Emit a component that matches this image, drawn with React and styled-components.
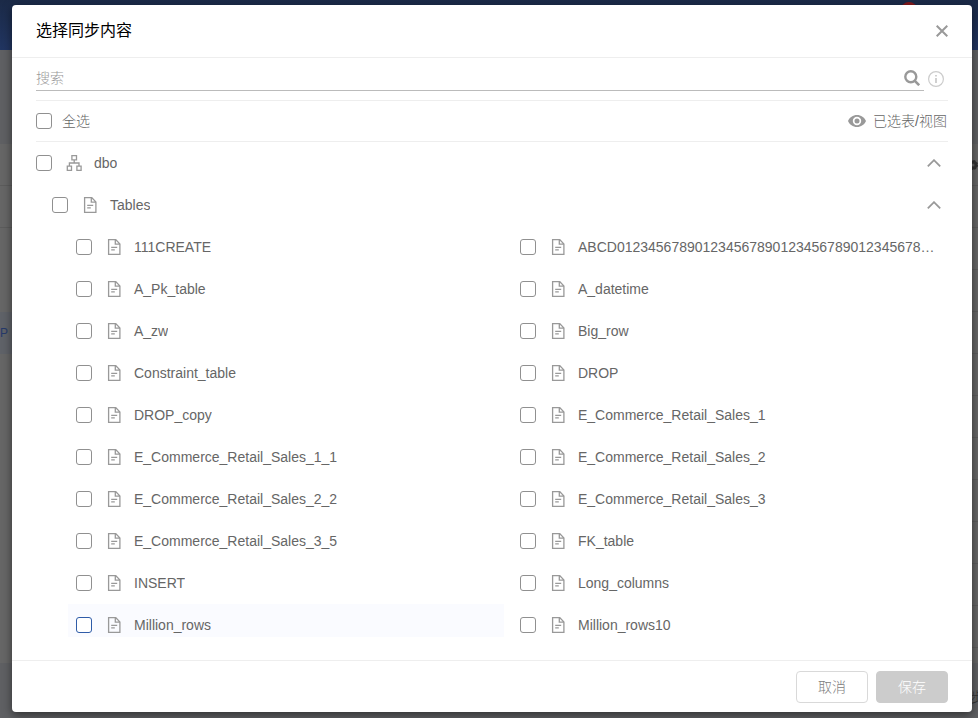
import { useState } from 'react';
import styled, { createGlobalStyle, css } from 'styled-components';

const GlobalStyle = createGlobalStyle`
  *, *::before, *::after {
    box-sizing: border-box;
  }

  body {
    margin: 0;
    color: #666;
    font-family: "Liberation Sans", "Noto Sans CJK SC", sans-serif;
    font-size: 14px;
    font-weight: 300;
    line-height: 20px;
  }

  button, input {
    font: inherit;
  }
`;

const Page = styled.div`
  position: relative;
  height: 100vh;
  overflow: hidden;
  display: flex;
  flex-direction: column;
  background: #5f6063;
`;

const TopBar = styled.div`
  flex: none;
  height: 50px;
  display: flex;
  align-items: flex-start;
  justify-content: flex-end;
  padding: 2px 61px 0 0;
  background: linear-gradient(#1b2a47, #213561);
`;

const Badge = styled.span`
  width: 16px;
  height: 16px;
  border-radius: 50%;
  background: #85191c;
`;

const PageBody = styled.div`
  flex: 1;
  min-height: 0;
  display: flex;
  flex-direction: column;
  padding-top: 94px;
`;

const PageTable = styled.div`
  flex: 1;
  min-height: 0;
  overflow: hidden;
  display: grid;
  grid-template-columns: 1fr 1fr;
  background: #666;
`;

const PageRow = styled.div`
  height: 42px;
  display: flex;
  align-items: center;
  justify-content: ${props => props.$end ? 'flex-end' : 'flex-start'};
  border-bottom: 1px solid ${props => props.$plain ? 'transparent' : '#5c5c5c'};
  background: ${props => props.$active ? '#5f6268' : 'transparent'};
  color: #26396a;
  font-size: 12px;
`;

const PageFooter = styled.div`
  flex: none;
  height: 55px;
  display: flex;
  align-items: center;
  justify-content: flex-end;
  margin-right: -6px;
  padding-top: 12px;
  color: #333;
`;

const Overlay = styled.div`
  position: absolute;
  inset: 0;
  display: flex;
  padding: 5px 6px 6px 12px;
`;

const Dialog = styled.form`
  flex: 1;
  min-width: 0;
  display: flex;
  flex-direction: column;
  border-radius: 4px;
  background: #fff;
  box-shadow: 0 3px 10px rgba(0, 0, 0, 0.5);
`;

const DialogHeader = styled.header`
  flex: none;
  height: 53px;
  display: flex;
  align-items: center;
  justify-content: space-between;
  padding: 0 20px 0 24px;
  border-bottom: 1px solid #eee;
`;

const Title = styled.h1`
  margin: 0;
  color: #000;
  font-size: 16px;
  font-weight: 400;
  line-height: 24px;
`;

const IconButton = styled.button`
  flex: none;
  display: flex;
  align-items: center;
  justify-content: center;
  width: ${props => props.$large ? '24px' : '20px'};
  height: ${props => props.$large ? '26px' : '20px'};
  padding: 0;
  border: 0;
  background: none;
  color: #999;
  cursor: pointer;
`;

const DialogBody = styled.div`
  flex: 1;
  min-height: 0;
  display: flex;
  flex-direction: column;
  padding: 8px 24px 23px;
`;

const SearchRow = styled.div`
  flex: none;
  height: 35px;
  display: flex;
  align-items: flex-start;
  border-bottom: 1px solid #eee;
`;

const SearchBox = styled.div`
  flex: 1;
  height: 25px;
  display: flex;
  align-items: center;
  border-bottom: 1px solid #bbb;
`;

const SearchInput = styled.input`
  flex: 1;
  min-width: 0;
  padding: 0;
  border: 0;
  outline: none;
  background: none;
  color: #666;

  &::placeholder {
    color: #999;
    opacity: 1;
  }
`;

const SelectAllRow = styled.div`
  flex: none;
  height: 41px;
  display: flex;
  align-items: center;
  justify-content: space-between;
  border-bottom: 1px solid #eee;
`;

const CheckLabel = styled.label`
  flex: 1;
  min-width: 0;
  display: flex;
  align-items: center;
  cursor: pointer;
`;

const Checkbox = styled.input`
  flex: none;
  appearance: none;
  width: 16px;
  height: 16px;
  margin: 0;
  border: 1px solid #909090;
  border-radius: 3px;
  background: #fff;

  ${props => props.$highlight && css`
    border-color: #2f5ca8;
  `}

  &:checked {
    border-color: #2f5ca8;
    background: #2f5ca8;
  }
`;

const LabelText = styled.span`
  padding-left: ${props => props.$plain ? '10px' : '12px'};
  overflow: hidden;
  text-overflow: ellipsis;
  white-space: nowrap;
`;

const RowIcon = styled.span`
  flex: none;
  display: flex;
  margin-left: 14px;
  color: #999;
`;

const ViewSelected = styled.button`
  display: flex;
  align-items: center;
  gap: 7px;
  padding: 0 1px 0 0;
  border: 0;
  background: none;
  color: #666;
  cursor: pointer;

  svg {
    color: #999;
  }
`;

const Tree = styled.div`
  flex: 1;
  min-height: 0;
  overflow: hidden;
`;

const GroupRow = styled.div`
  height: 42px;
  display: flex;
  align-items: center;
  padding: 0 4px 0 ${props => props.$level * 16}px;
`;

const Grid = styled.ul`
  display: grid;
  grid-template-columns: repeat(2, minmax(0, 1fr));
  column-gap: 8px;
  margin: 0;
  padding: 0 0 0 32px;
  list-style: none;
`;

const Item = styled.li`
  height: 42px;
  display: flex;
  align-items: center;
  padding: 0 10px 0 8px;
  background: ${props => props.$highlight ? '#fafbff' : 'transparent'};
`;

const DialogFooter = styled.footer`
  flex: none;
  display: flex;
  justify-content: flex-end;
  gap: 8px;
  padding: 10px 24px 9px;
  border-top: 1px solid #eee;
`;

const Button = styled.button`
  width: 72px;
  height: 32px;
  padding: 0;
  border: 1px solid ${props => props.$primary ? '#ccc' : '#d9d9d9'};
  border-radius: 4px;
  background: ${props => props.$primary ? '#ccc' : '#fff'};
  color: ${props => props.$primary ? '#fff' : '#808080'};
`;

const tables = [
  '111CREATE',
  'ABCD012345678901234567890123456789012345678901234567890123456789',
  'A_Pk_table',
  'A_datetime',
  'A_zw',
  'Big_row',
  'Constraint_table',
  'DROP',
  'DROP_copy',
  'E_Commerce_Retail_Sales_1',
  'E_Commerce_Retail_Sales_1_1',
  'E_Commerce_Retail_Sales_2',
  'E_Commerce_Retail_Sales_2_2',
  'E_Commerce_Retail_Sales_3',
  'E_Commerce_Retail_Sales_3_5',
  'FK_table',
  'INSERT',
  'Long_columns',
  'Million_rows',
  'Million_rows10',
];

const pageRows = Array.from({ length: 12 }, (_, i) => i);

const CloseIcon = () => (
  <svg width="12" height="12" viewBox="0 0 12 12" fill="none" stroke="currentColor" strokeWidth="2">
    <path d="M.7.7l10.600 10.600M11.300.7L.7 11.300" />
  </svg>
);

const SearchIcon = () => (
  <svg width="16" height="16" viewBox="0 0 16 16" fill="none" stroke="currentColor" strokeWidth="2.400">
    <circle cx="6.800" cy="6.800" r="5.500" />
    <path d="M10.800 10.800l4.400 4.400" strokeWidth="2.600" />
  </svg>
);

const InfoIcon = () => (
  <svg width="16" height="16" viewBox="0 0 16 16" fill="none" stroke="#ccc">
    <circle cx="8" cy="8" r="7.400" strokeWidth="1.200" />
    <path d="M8 4v1.600M8 7v5" strokeWidth="1.800" />
  </svg>
);

const EyeIcon = () => (
  <svg width="18" height="12" viewBox="0 0 18 12" fill="currentColor">
    <path fillRule="evenodd" d="M9 0C5 0 1.500 2.500 0 6c1.500 3.500 5 6 9 6s7.500-2.500 9-6c-1.500-3.500-5-6-9-6zm0 10.200a4.200 4.200 0 1 1 0-8.400 4.200 4.200 0 0 1 0 8.400zM9 3.500a2.500 2.500 0 1 0 0 5 2.500 2.500 0 0 0 0-5z" />
  </svg>
);

const ChevronIcon = () => (
  <svg width="14" height="8" viewBox="0 0 14 8" fill="none" stroke="currentColor" strokeWidth="1.800">
    <path d="M.8 7.300L7 1.200l6.200 6.100" />
  </svg>
);

const SchemaIcon = () => (
  <svg width="16" height="16" viewBox="0 0 16 16" fill="none" stroke="currentColor" strokeWidth="1.300">
    <path d="M5.900.7h4.600v4.200H5.900zM1.300 11.100h4.200v4.200H1.300zM10.900 11.100h4.200v4.200h-4.200zM8.200 5v3M3.400 11V8h9.600v3" />
  </svg>
);

const FileIcon = () => (
  <svg width="16" height="16" viewBox="0 0 16 16" fill="none" stroke="currentColor" strokeWidth="1.300">
    <path d="M2.600.7h7.200l4.100 4.200v10.400H2.600zM9.300.7v4.500h4.600M5.200 8.300h6M5.200 10.900h3.600" />
  </svg>
);

const GearIcon = () => (
  <svg width="10" height="10" viewBox="0 0 10 10" fill="none" stroke="#333" strokeWidth="3">
    <circle cx="5" cy="5" r="3" />
    <circle cx="5" cy="5" r="4.200" strokeWidth="1.600" strokeDasharray="1.800 1.500" />
  </svg>
);

function CheckRow({ icon, text, highlight }) {
  const [checked, setChecked] = useState(false);

  return (
    <CheckLabel>
      <Checkbox
        type="checkbox"
        checked={checked}
        onChange={e => setChecked(e.target.checked)}
        $highlight={highlight}
      />
      {icon && <RowIcon>{icon}</RowIcon>}
      <LabelText $plain={!icon}>{text}</LabelText>
    </CheckLabel>
  );
}

export default function App() {
  return (
    <>
      <GlobalStyle />
      <Page>
        <TopBar><Badge /></TopBar>
        <PageBody>
          <PageTable>
            <div>
              {pageRows.map(i => (
                <PageRow key={i} $plain={i > 1} $active={i === 4}>{i === 4 && 'P'}</PageRow>
              ))}
            </div>
            <div>
              {pageRows.map(i => (
                <PageRow key={i} $end>{i === 0 && <GearIcon />}</PageRow>
              ))}
            </div>
          </PageTable>
          <PageFooter>同步</PageFooter>
        </PageBody>
        <Overlay>
          <Dialog role="dialog" aria-labelledby="dialog-title" onSubmit={e => e.preventDefault()}>
            <DialogHeader>
              <Title id="dialog-title">选择同步内容</Title>
              <IconButton type="button" aria-label="关闭"><CloseIcon /></IconButton>
            </DialogHeader>
            <DialogBody>
              <SearchRow>
                <SearchBox>
                  <SearchInput type="text" placeholder="搜索" aria-label="搜索" />
                  <IconButton type="button" aria-label="搜索" $large><SearchIcon /></IconButton>
                </SearchBox>
                <IconButton type="button" aria-label="说明" $large><InfoIcon /></IconButton>
              </SearchRow>
              <SelectAllRow>
                <CheckRow text="全选" />
                <ViewSelected type="button"><EyeIcon />已选表/视图</ViewSelected>
              </SelectAllRow>
              <Tree>
                <GroupRow $level={0}>
                  <CheckRow icon={<SchemaIcon />} text="dbo" />
                  <IconButton type="button" aria-label="dbo"><ChevronIcon /></IconButton>
                </GroupRow>
                <GroupRow $level={1}>
                  <CheckRow icon={<FileIcon />} text="Tables" />
                  <IconButton type="button" aria-label="Tables"><ChevronIcon /></IconButton>
                </GroupRow>
                <Grid>
                  {tables.map(name => (
                    <Item key={name} $highlight={name === 'Million_rows'}>
                      <CheckRow icon={<FileIcon />} text={name} highlight={name === 'Million_rows'} />
                    </Item>
                  ))}
                </Grid>
              </Tree>
            </DialogBody>
            <DialogFooter>
              <Button type="button">取消</Button>
              <Button type="submit" disabled $primary>保存</Button>
            </DialogFooter>
          </Dialog>
        </Overlay>
      </Page>
    </>
  );
}
